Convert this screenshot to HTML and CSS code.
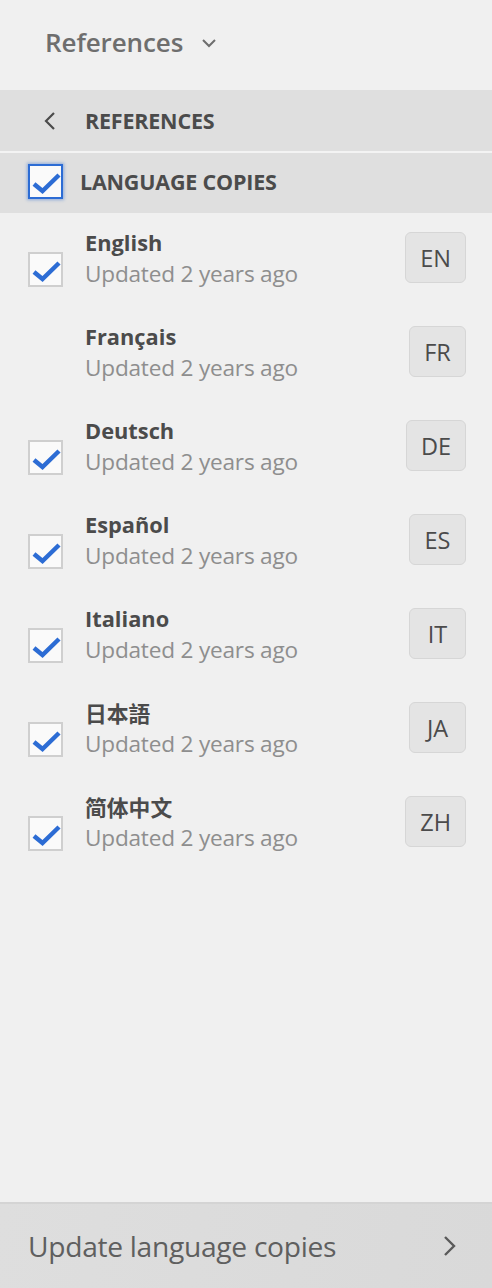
FILE: index.html
```html
<!DOCTYPE html>
<html lang="en">
<head>
<meta charset="utf-8">
<link rel="stylesheet" href="styles.css">
</head>
<body>
<div class="panel">
  <header class="top">
    <span class="top-title">References</span>
    <svg class="top-chev" width="16" height="10" viewBox="0 0 16 10"><path d="M2 2 L8 8 L14 2" fill="none" stroke="#6e6e6e" stroke-width="2"/></svg>
  </header>
  <div class="bar bar-back">
    <svg class="back-chev" width="14" height="20" viewBox="0 0 14 20"><path d="M11 2 L3 10 L11 18" fill="none" stroke="#4b4b4b" stroke-width="2.2"/></svg>
    <span class="bar-label">REFERENCES</span>
  </div>
  <div class="bar bar-group">
    <span class="cb cb-focus"><svg viewBox="0 0 31 31"><path d="M4 18 L12.5 25 L29 9" fill="none" stroke="#2c6cd4" stroke-width="4.5"/></svg></span>
    <span class="bar-label">LANGUAGE COPIES</span>
  </div>
  <ul class="list">
    <li class="row">
      <span class="cb"><svg viewBox="0 0 31 31"><path d="M4 18 L12.5 25 L29 9" fill="none" stroke="#2c6cd4" stroke-width="4.5"/></svg></span>
      <div class="txt"><div class="name">English</div><div class="sub">Updated 2 years ago</div></div>
      <span class="badge">EN</span>
    </li>
    <li class="row">
      <span class="cb-empty"></span>
      <div class="txt"><div class="name">Français</div><div class="sub">Updated 2 years ago</div></div>
      <span class="badge">FR</span>
    </li>
    <li class="row">
      <span class="cb"><svg viewBox="0 0 31 31"><path d="M4 18 L12.5 25 L29 9" fill="none" stroke="#2c6cd4" stroke-width="4.5"/></svg></span>
      <div class="txt"><div class="name">Deutsch</div><div class="sub">Updated 2 years ago</div></div>
      <span class="badge">DE</span>
    </li>
    <li class="row">
      <span class="cb"><svg viewBox="0 0 31 31"><path d="M4 18 L12.5 25 L29 9" fill="none" stroke="#2c6cd4" stroke-width="4.5"/></svg></span>
      <div class="txt"><div class="name">Español</div><div class="sub">Updated 2 years ago</div></div>
      <span class="badge">ES</span>
    </li>
    <li class="row">
      <span class="cb"><svg viewBox="0 0 31 31"><path d="M4 18 L12.5 25 L29 9" fill="none" stroke="#2c6cd4" stroke-width="4.5"/></svg></span>
      <div class="txt"><div class="name">Italiano</div><div class="sub">Updated 2 years ago</div></div>
      <span class="badge">IT</span>
    </li>
    <li class="row">
      <span class="cb"><svg viewBox="0 0 31 31"><path d="M4 18 L12.5 25 L29 9" fill="none" stroke="#2c6cd4" stroke-width="4.5"/></svg></span>
      <div class="txt"><div class="name cjk">日本語</div><div class="sub">Updated 2 years ago</div></div>
      <span class="badge">JA</span>
    </li>
    <li class="row">
      <span class="cb"><svg viewBox="0 0 31 31"><path d="M4 18 L12.5 25 L29 9" fill="none" stroke="#2c6cd4" stroke-width="4.5"/></svg></span>
      <div class="txt"><div class="name cjk">简体中文</div><div class="sub">Updated 2 years ago</div></div>
      <span class="badge">ZH</span>
    </li>
  </ul>
  <footer class="foot">
    <span class="foot-label">Update language copies</span>
    <svg class="foot-chev" width="16" height="24" viewBox="0 0 16 24"><path d="M3 3 L12 12 L3 21" fill="none" stroke="#5a5a5a" stroke-width="2.4"/></svg>
  </footer>
</div>
</body>
</html>
```

FILE: styles.css
```css
* { box-sizing: border-box; }
html, body { margin: 0; padding: 0; }
body {
  background: #f0f0f0;
  font-family: "Open Sans", "Noto Sans CJK SC", sans-serif;
  color: #4b4b4b;
}
.panel {
  height: 1288px;
  display: flex;
  flex-direction: column;
}
.top {
  height: 90px;
  display: flex;
  align-items: center;
  padding-left: 45px;
  padding-bottom: 6px;
  gap: 18px;
}
.top-title {
  font-size: 26px;
  font-weight: 600;
  color: #6e6e6e;
  letter-spacing: -0.1px;
}
.top-chev { margin-top: 2px; }
.bar {
  background: #dfdfdf;
  display: flex;
  align-items: center;
}
.bar-back {
  height: 63px;
  padding-left: 43px;
  gap: 28px;
  border-bottom: 2px solid #f3f3f3;
}
.bar-group {
  height: 60px;
  padding-left: 28px;
  padding-bottom: 3px;
  gap: 17px;
}
.bar-label {
  font-size: 21.5px;
  font-weight: 700;
  color: #4b4b4b;
  letter-spacing: -0.2px;
}
.cb {
  width: 35px;
  height: 35px;
  flex: none;
  background: #fafafa;
  border: 2px solid #cfcfcf;
  display: block;
}
.cb svg { display: block; width: 31px; height: 31px; }
.cb-focus {
  border-color: #2c6cd4;
  box-shadow: 0 0 3px 1px rgba(44,108,212,0.45);
}
.cb-empty { width: 35px; height: 35px; display: block; }
.list {
  list-style: none;
  margin: 0;
  padding: 0;
  flex: 1;
}
.row {
  height: 94px;
  display: grid;
  grid-template-columns: 35px 1fr auto;
  column-gap: 22px;
  align-items: start;
  padding: 14px 26px 0 28px;
}
.row .cb, .row .cb-empty { margin-top: 25px; }
.txt { line-height: 31px; }
.name {
  font-size: 21.8px;
  font-weight: 700;
  color: #4b4b4b;
}
.name.cjk { font-family: "Noto Sans CJK SC", sans-serif; }
.sub {
  font-size: 22.6px;
  color: #8e8e8e;
  letter-spacing: -0.2px;
}
.badge {
  margin-top: 5px;
  height: 51px;
  min-width: 57px;
  padding: 0 14px;
  display: flex;
  align-items: center;
  justify-content: center;
  background: #e4e4e4;
  border: 1px solid #d6d6d6;
  border-radius: 6px;
  font-size: 23.5px;
  color: #4b4b4b;
}
.foot {
  height: 86px;
  background: linear-gradient(100deg, #dedede, #d9d9d9);
  border-top: 2px solid #d4d4d4;
  display: flex;
  align-items: center;
  justify-content: space-between;
  padding: 0 34px 0 28px;
}
.foot-label {
  font-size: 28.2px;
  color: #5f5f5f;
  letter-spacing: -0.3px;
}
```
